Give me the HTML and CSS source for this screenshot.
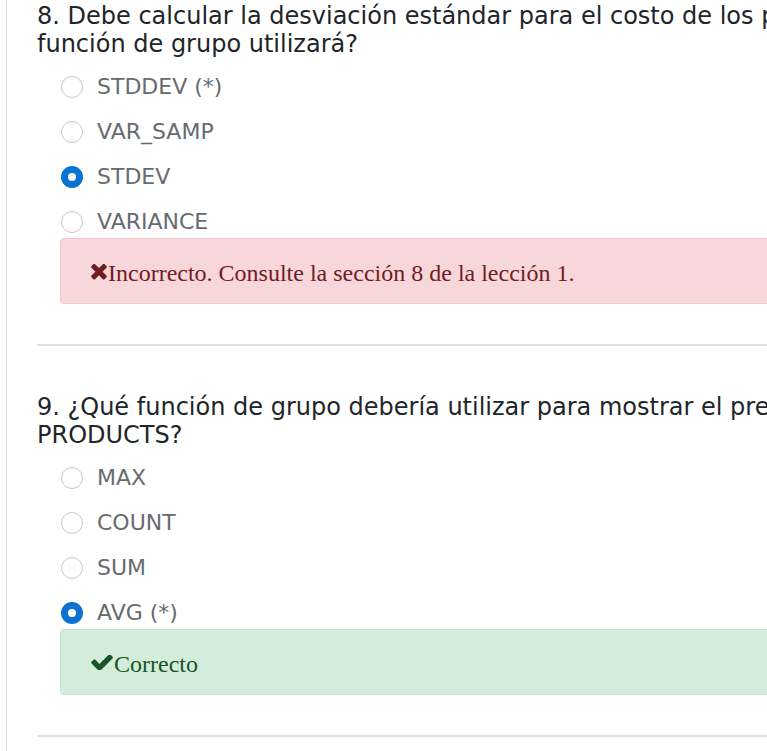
FILE: index.html
```html
<!DOCTYPE html>
<html lang="es">
<head>
<meta charset="utf-8">
<title>Cuestionario</title>
<link rel="stylesheet" href="styles.css">
</head>
<body>
<div class="page">
  <div class="content">
    <section class="question">
      <h2 class="q-title">8. Debe calcular la desviación estándar para el costo de los productos. ¿Qué<br>función de grupo utilizará?</h2>
      <ul class="options">
        <li class="option"><span class="radio"></span><span class="label">STDDEV (*)</span></li>
        <li class="option"><span class="radio"></span><span class="label">VAR_SAMP</span></li>
        <li class="option"><span class="radio checked"></span><span class="label">STDEV</span></li>
        <li class="option"><span class="radio"></span><span class="label">VARIANCE</span></li>
      </ul>
      <div class="alert alert-danger">
        <svg class="icon icon-x" viewBox="100 400 1210 1170" aria-hidden="true"><path d="M1298 1322q0 40-28 68l-136 136q-28 28-68 28t-68-28l-294-294-294 294q-28 28-68 28t-68-28l-136-136q-28-28-28-68t28-68l294-294-294-294q-28-28-28-68t28-68l136-136q28-28 68-28t68 28l294 294 294-294q28-28 68-28t68 28l136 136q28 28 28 68t-28 68l-294 294 294 294q28 28 28 68z"/></svg>Incorrecto. Consulte la sección 8 de la lección 1.
      </div>
      <hr class="divider">
    </section>
    <section class="question">
      <h2 class="q-title">9. ¿Qué función de grupo debería utilizar para mostrar el precio medio de la tabla<br>PRODUCTS?</h2>
      <ul class="options">
        <li class="option"><span class="radio"></span><span class="label">MAX</span></li>
        <li class="option"><span class="radio"></span><span class="label">COUNT</span></li>
        <li class="option"><span class="radio"></span><span class="label">SUM</span></li>
        <li class="option"><span class="radio checked"></span><span class="label">AVG (*)</span></li>
      </ul>
      <div class="alert alert-success">
        <svg class="icon icon-check" viewBox="110 420 1570 1000" aria-hidden="true"><path d="M1671 566q0 40-28 68l-724 724-136 136q-28 28-68 28t-68-28l-136-136-362-362q-28-28-28-68t28-68l136-136q28-28 68-28t68 28l294 295 656-657q28-28 68-28t68 28l136 136q28 28 28 68z"/></svg>Correcto
      </div>
      <hr class="divider">
    </section>
  </div>
</div>
</body>
</html>
```

FILE: styles.css
```css
html, body {
  margin: 0;
  padding: 0;
  background: #ffffff;
  overflow: hidden;
}

.page {
  margin-left: 6px;
  border-left: 1px solid #dddddd;
  min-height: 751px;
  width: 1300px;
}

.content {
  padding-left: 30px;
  padding-top: 2px;
}

.question {
  display: flex;
  flex-direction: column;
}

.q-title {
  margin: 0 0 14px 0;
  font-family: "DejaVu Sans", Verdana, sans-serif;
  font-weight: normal;
  font-size: 24px;
  letter-spacing: 0;
  line-height: 28px;
  color: #212529;
  white-space: nowrap;
}

.options {
  list-style: none;
  margin: 0 0 1px 23px;
  padding: 0;
  display: flex;
  flex-direction: column;
  gap: 15px;
}

.option {
  display: flex;
  align-items: center;
  height: 30px;
  gap: 14px;
}

.radio {
  box-sizing: border-box;
  width: 22px;
  height: 22px;
  margin-left: 1px;
  border-radius: 50%;
  border: 1px solid #c8c8c8;
  background: #ffffff;
  flex: none;
}

.radio.checked {
  border: 7px solid #0a72d1;
  background: #ffffff;
}

.label {
  font-family: "DejaVu Sans", Verdana, sans-serif;
  font-size: 22px;
  line-height: 30px;
  color: #666b70;
}

.alert {
  box-sizing: border-box;
  margin-left: 23px;
  height: 66px;
  padding: 4px 30px 0 30px;
  border: 1px solid transparent;
  border-radius: 4px;
  display: flex;
  align-items: center;
  font-family: "Liberation Serif", "Times New Roman", serif;
  font-size: 24px;
}

.alert-danger {
  background: #f8d7da;
  border-color: #f5c6cb;
  color: #721c24;
}

.alert-success {
  background: #d4edda;
  border-color: #c3e6cb;
  color: #155724;
}

.icon {
  fill: currentColor;
  flex: none;
}

.icon-x {
  width: 16px;
  height: 16px;
  margin-right: 1px;
  margin-top: -3px;
}

.icon-check {
  width: 22px;
  height: 15px;
  margin-right: 1px;
  margin-top: -3px;
}

.divider {
  width: 100%;
  margin: 40px 0 47px 0;
  border: 0;
  height: 2px;
  background: #dee2e6;
}
```
